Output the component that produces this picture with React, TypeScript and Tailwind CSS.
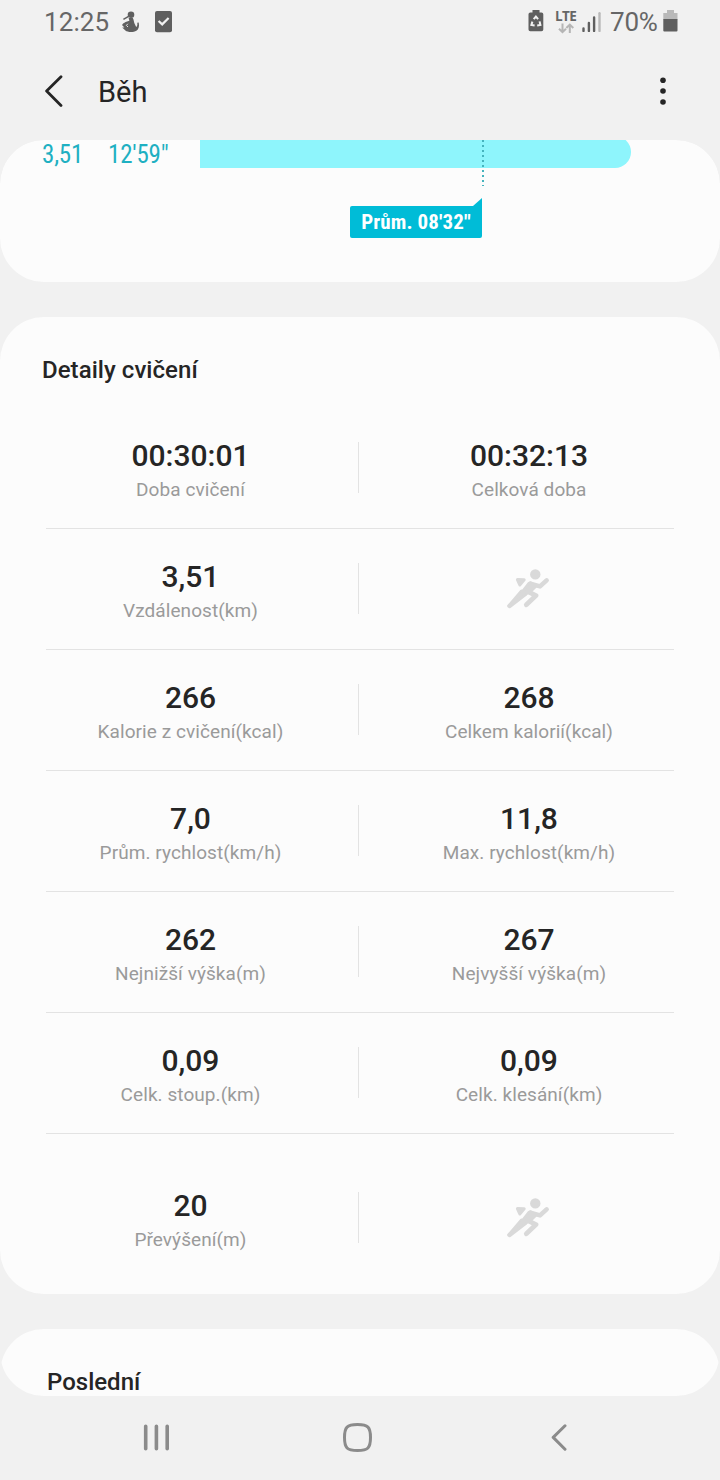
import React from 'react';

interface Stat {
  value: string;
  label: string;
}

interface StatRow {
  left: Stat;
  right?: Stat;
}

const rows: StatRow[] = [
  { left: { value: '00:30:01', label: 'Doba cvičení' }, right: { value: '00:32:13', label: 'Celková doba' } },
  { left: { value: '3,51', label: 'Vzdálenost(km)' } },
  { left: { value: '266', label: 'Kalorie z cvičení(kcal)' }, right: { value: '268', label: 'Celkem kalorií(kcal)' } },
  { left: { value: '7,0', label: 'Prům. rychlost(km/h)' }, right: { value: '11,8', label: 'Max. rychlost(km/h)' } },
  { left: { value: '262', label: 'Nejnižší výška(m)' }, right: { value: '267', label: 'Nejvyšší výška(m)' } },
  { left: { value: '0,09', label: 'Celk. stoup.(km)' }, right: { value: '0,09', label: 'Celk. klesání(km)' } },
  { left: { value: '20', label: 'Převýšení(m)' } }
];

const RunnerIcon = () => (
  <svg width="44" height="40" viewBox="0 0 44 40" fill="none" stroke="#d9d9d9" strokeLinecap="round" strokeLinejoin="round">
    <circle cx="29.3" cy="5.4" r="5.2" fill="#d9d9d9" stroke="none" />
    <path d="M11.4 10.6 L18.2 10.8 L13.8 16 Z" fill="#d9d9d9" strokeWidth="3" />
    <path d="M2.6 37 L15.5 22 L19.5 25.5 L3.6 37.8 Z" fill="#d9d9d9" strokeWidth="3" />
    <path d="M22.8 14 L24.5 13.4 L30.6 17 L25.5 22 L18 26.5 L15 24 Z" fill="#d9d9d9" strokeWidth="2.2" />
    <path d="M24.5 14.8 L34 17.4 L40.6 11.4" strokeWidth="4.6" />
    <path d="M22 22.6 L30 26.6 L20.3 35.8" strokeWidth="4.8" />
  </svg>
);

const StatusBar = () => (
  <div className="flex h-11 items-center justify-between pl-[43px] pr-[42px] text-[#666]">
    <div className="flex items-center">
      <span className="w-[78px] pl-px text-[26px] leading-none tracking-[0.1px]">12:25</span>
      <svg width="20" height="22" viewBox="0 0 20 22" fill="#5f5f5f">
        <circle cx="10" cy="3.8" r="3.3" />
        <path d="M7.6 7 H11.8 C13 9 12.8 11.5 14 13.4 L15.2 16 C16.4 15 16.6 13.6 16.2 11.8 L17.7 11.4 C18.6 15.2 17.6 18.4 15.4 19.8 C12.5 21.6 6.6 21.5 4.4 19.6 L1.2 16.6 L3.4 16.4 L1 14 C1.6 12.8 3 11.8 4.6 11 L8.4 9.8 Z" />
        <path d="M2.4 8.4 L7.6 5.4" stroke="#5f5f5f" strokeWidth="1.6" />
        <path d="M6.8 12.8 L5.4 14.4 L7 16" stroke="#f1f1f1" strokeWidth="0.9" fill="none" />
      </svg>
      <svg className="ml-[14px]" width="17" height="22" viewBox="0 0 17 22">
        <rect y="0" width="17" height="21.3" rx="2" fill="#5f5f5f" />
        <path d="M3.6 10 L7.2 13.4 L13.6 7" fill="none" stroke="#f1f1f1" strokeWidth="2.2" />
      </svg>
    </div>
    <div className="flex items-center">
      <svg className="overflow-visible" width="16" height="22" viewBox="0 0 16 22">
        <path d="M4.5 -1 H11.5 V1.5 H13.5 Q15.3 1.5 15.3 3.3 V18.5 Q15.3 20.3 13.5 20.3 H2.3 Q0.5 20.3 0.5 18.5 V3.3 Q0.5 1.5 2.3 1.5 H4.5 Z" fill="#5f5f5f" />
        <path d="M5.7 8.2 L7.9 5.6 L10.1 8.2 M11.6 10.4 L12.4 14 L9.2 14.4 M6.6 14.4 L3.4 14 L4.4 10.6" fill="none" stroke="#f1f1f1" strokeWidth="2" />
      </svg>
      <div className="ml-[11px] flex w-[21px] flex-col items-center">
        <span className="font-['Open_Sans',sans-serif] text-[13.5px] font-bold leading-[10px] tracking-[-0.6px]">LTE</span>
        <svg className="mt-[2px] -mb-[1px]" width="16" height="11" viewBox="0 0 16 11" fill="none" stroke="#b5b5b5" strokeWidth="2">
          <path d="M4.5 0.5 V9 M1 5.8 L4.5 9.2 L8 5.8" />
          <path d="M11.8 10 V2 M8.3 5 L11.8 1.6 L15.3 5" />
        </svg>
      </div>
      <svg className="ml-[6px]" width="19" height="21" viewBox="0 0 19 21" strokeWidth="2.4" strokeLinecap="round" stroke="#5f5f5f">
        <path d="M1.5 16.5 V18.9 M6.9 10.9 V18.9 M12.1 5.5 V18.9" />
        <path d="M17.5 1.2 V18.9" stroke="#b9b9b9" />
      </svg>
      <span className="ml-[9px] w-[52px] text-[26px] leading-none tracking-[-0.2px]">70%</span>
      <svg className="ml-px overflow-visible" width="15" height="22" viewBox="0 0 15 22">
        <path d="M4 -1 H11 V2 H14.5 V8.5 H0.3 V2 H4 Z" fill="#b9b9b9" />
        <path d="M0.3 8 H14.5 V19.5 Q14.5 20.5 13.5 20.5 H1.3 Q0.3 20.5 0.3 19.5 Z" fill="#5f5f5f" />
      </svg>
    </div>
  </div>
);

const StatCell: React.FC<{ stat: Stat }> = ({ stat }) => (
  <div className="flex flex-col items-center pt-[30px]">
    <span className="pl-px text-[30px] font-medium leading-9 text-[#252525]">{stat.value}</span>
    <span className="mt-[5px] pl-px text-[19px] leading-[22px] tracking-[0.07px] text-[#9a9a9a]">{stat.label}</span>
  </div>
);

const PaceCard = () => (
  <section className="h-[142px] shrink-0 overflow-hidden rounded-[44px] bg-[#fcfcfc] font-['Roboto_Condensed',Roboto,sans-serif]">
    <div className="relative flex h-7 items-end">
      <span className="ml-[42px] w-[66px] pt-px text-[25px] leading-[26px] tracking-[-0.2px] text-[#1fb0c2]">3,51</span>
      <span className="w-[92px] pt-px text-[25px] leading-[26px] tracking-[-0.2px] text-[#1fb0c2]">12'59"</span>
      <div className="h-8 w-[431px] rounded-r-2xl bg-[#8ef5fc]" />
      <svg className="absolute left-[482px] top-0" width="2" height="46">
        <path d="M1 0 V46" stroke="#45b3bd" strokeWidth="2" strokeDasharray="2 3" />
      </svg>
    </div>
    <div className="ml-[350px] mt-[30px] w-[132px]">
      <svg className="ml-auto block" width="9" height="8">
        <path d="M9 0 V8 H0 Z" fill="#00bcd7" />
      </svg>
      <div className="flex h-8 items-center justify-center rounded-[2px] rounded-tr-none bg-[#00bcd7] pt-[2px] text-[21px] font-bold tracking-[0.1px] text-white">
        Prům. 08'32"
      </div>
    </div>
  </section>
);

const DetailsCard = () => (
  <section className="mt-[35px] h-[977px] shrink-0 rounded-[44px] bg-[#fcfcfc] pt-9">
    <h2 className="ml-[42px] text-2xl font-medium leading-[34px] tracking-[0.05px] text-[#252525]">Detaily cvičení</h2>
    <div className="mt-[21px] px-[22px]">
      {rows.map((row, idx) => {
        const last = idx === rows.length - 1;
        return (
          <div key={row.left.label} className={last ? 'mt-6' : ''}>
            <div className="grid h-[120px] grid-cols-[336px_1px_339px]">
              <StatCell stat={row.left} />
              <div className="mt-[34px] h-[51px] bg-[#e3e3e3]" />
              {row.right ? (
                <StatCell stat={row.right} />
              ) : (
                <div className="flex justify-center pr-[2px] pt-10">
                  <RunnerIcon />
                </div>
              )}
            </div>
            {!last && <div className="mx-6 h-px bg-[#e3e3e3]" />}
          </div>
        );
      })}
    </div>
  </section>
);

export default function App() {
  return (
    <div className="flex h-[1480px] w-[720px] flex-col overflow-hidden bg-[#f1f1f1] font-[Roboto,sans-serif]">
      <StatusBar />

      <header className="flex h-24 items-center pl-[44px] pr-[54px]">
        <svg width="20" height="34" viewBox="0 0 20 34" fill="none" stroke="#252525" strokeWidth="2.8" strokeLinecap="round" strokeLinejoin="round">
          <path d="M17 1.8 L2.6 16 L17 30.4" />
        </svg>
        <h1 className="ml-[34px] text-[29px] leading-9 text-[#252525]">Běh</h1>
        <svg className="ml-auto overflow-visible" width="6" height="28" viewBox="0 0 6 28" fill="#252525">
          <circle cx="3" cy="2.2" r="2.8" />
          <circle cx="3" cy="13" r="2.8" />
          <circle cx="3" cy="24" r="2.8" />
        </svg>
      </header>

      <main className="flex h-[1256px] flex-col overflow-hidden rounded-[44px]">
        <PaceCard />
        <DetailsCard />
        <section className="mt-[35px] h-40 shrink-0 rounded-[44px] bg-[#fcfcfc] pt-9">
          <h2 className="ml-[47px] text-2xl font-medium leading-[34px] text-[#252525]">Poslední</h2>
        </section>
      </main>

      <nav className="flex h-[84px] items-center pl-[143px]">
        <svg width="27" height="28" viewBox="0 0 27 28" stroke="#8b8b8b" strokeWidth="3.6" strokeLinecap="round">
          <path d="M2.7 2.2 V24.7 M13.4 2.2 V24.7 M24.2 2.2 V24.7" />
        </svg>
        <svg className="ml-[172px]" width="31" height="30" viewBox="0 0 31 30" fill="none" stroke="#8b8b8b" strokeWidth="3">
          <path d="M15.5 1.6 C26 1.6 28.5 4 28.5 14.6 C28.5 25.1 26 27.6 15.5 27.6 C5 27.6 2.5 25.1 2.5 14.6 C2.5 4 5 1.6 15.5 1.6 Z" />
        </svg>
        <svg className="ml-[177px]" width="18" height="28" viewBox="0 0 18 28" fill="none" stroke="#8b8b8b" strokeWidth="3" strokeLinecap="round" strokeLinejoin="round">
          <path d="M15 1.8 L3.2 13.4 L15 25.2" />
        </svg>
      </nav>
    </div>
  );
}
